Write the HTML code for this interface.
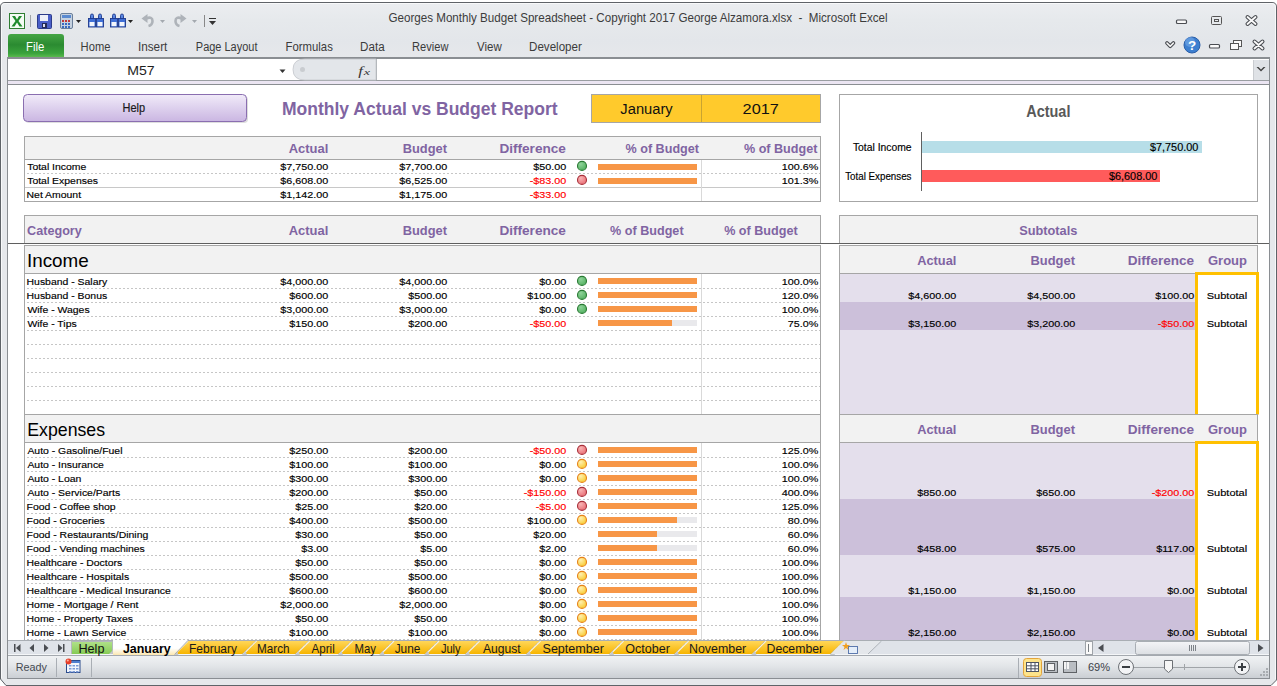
<!DOCTYPE html><html><head><meta charset="utf-8"><style>html,body{margin:0;padding:0;width:1277px;height:686px;overflow:hidden;background:#fff}svg{display:block}text{white-space:pre}</style></head><body><svg width="1277" height="686" viewBox="0 0 1277 686"><defs>
<linearGradient id="gFrame" gradientUnits="userSpaceOnUse" x1="0" y1="0" x2="0" y2="686"><stop offset="0" stop-color="#eceef1"/><stop offset="0.03" stop-color="#e6e9ec"/><stop offset="0.06" stop-color="#e3e6ea"/><stop offset="0.085" stop-color="#e6e8eb"/><stop offset="1" stop-color="#e6e8eb"/></linearGradient>
<linearGradient id="gFile" x1="0" y1="0" x2="0" y2="1"><stop offset="0" stop-color="#45a545"/><stop offset="0.45" stop-color="#2b8b31"/><stop offset="0.8" stop-color="#3aa23c"/><stop offset="1" stop-color="#62c052"/></linearGradient>
<linearGradient id="gHelp" x1="0" y1="0" x2="0" y2="1"><stop offset="0" stop-color="#f1ebf9"/><stop offset="1" stop-color="#cab6e2"/></linearGradient>
<linearGradient id="gTab" x1="0" y1="0" x2="0" y2="1"><stop offset="0" stop-color="#ffd659"/><stop offset="1" stop-color="#f7b500"/></linearGradient>
<linearGradient id="gTabHelp" x1="0" y1="0" x2="0" y2="1"><stop offset="0" stop-color="#b2e28c"/><stop offset="1" stop-color="#86cb55"/></linearGradient>
<linearGradient id="gTabAct" x1="0" y1="0" x2="0" y2="1"><stop offset="0" stop-color="#ffffff"/><stop offset="0.55" stop-color="#ffffff"/><stop offset="1" stop-color="#fbe7b0"/></linearGradient>
<linearGradient id="gStatus" x1="0" y1="0" x2="0" y2="1"><stop offset="0" stop-color="#f0f2f4"/><stop offset="0.45" stop-color="#e2e5e8"/><stop offset="1" stop-color="#c9cdd2"/></linearGradient>
<linearGradient id="gScroll" x1="0" y1="0" x2="0" y2="1"><stop offset="0" stop-color="#f4f5f7"/><stop offset="1" stop-color="#dcdfe3"/></linearGradient>
<radialGradient id="dG" cx="0.35" cy="0.3" r="0.8"><stop offset="0" stop-color="#8fd39a"/><stop offset="1" stop-color="#4fae5c"/></radialGradient>
<radialGradient id="dR" cx="0.35" cy="0.3" r="0.8"><stop offset="0" stop-color="#f8b4b4"/><stop offset="1" stop-color="#e86a72"/></radialGradient>
<radialGradient id="dY" cx="0.35" cy="0.3" r="0.8"><stop offset="0" stop-color="#fff0b0"/><stop offset="1" stop-color="#f8c828"/></radialGradient>
</defs>
<rect x="0" y="0" width="1277" height="686" fill="#ffffff" />
<path d="M0.5,679 L0.5,7 Q0.5,2.5 5,2.5 L1272,2.5 Q1276.5,2.5 1276.5,7 L1276.5,680 L1271,685.5 L6,685.5 L0.5,679 Z" fill="url(#gFrame)" stroke="#5f6368" stroke-width="1"/>
<path d="M1.5,678 L1.5,7 Q1.5,3.5 5,3.5 L1272,3.5 Q1275.5,3.5 1275.5,7 L1275.5,679" fill="none" stroke="#f8f9fa" stroke-width="1"/>
<text transform="translate(388.42,22) scale(0.8916,1)" style="font-family:'Liberation Sans';font-size:13.04px;font-weight:normal;" fill="#3c3c3c" >Georges Monthly Budget Spreadsheet - Copyright 2017 George Alzamora.xlsx  -  Microsoft Excel</text>
<path d="M8,58 L8,37 Q8,34 11,34 L61,34 Q64,34 64,37 L64,58 Z" fill="url(#gFile)"/>
<text transform="translate(26.09,50.5) scale(0.9122,1)" style="font-family:'Liberation Sans';font-size:12.46px;font-weight:normal;" fill="#ffffff" >File</text>
<text transform="translate(80.61,50.5) scale(0.8963,1)" style="font-family:'Liberation Sans';font-size:12.46px;font-weight:normal;" fill="#3b3b3b" >Home</text>
<text transform="translate(137.94,50.5) scale(0.9442,1)" style="font-family:'Liberation Sans';font-size:12.46px;font-weight:normal;" fill="#3b3b3b" >Insert</text>
<text transform="translate(195.82,50.5) scale(0.8823,1)" style="font-family:'Liberation Sans';font-size:12.46px;font-weight:normal;" fill="#3b3b3b" >Page Layout</text>
<text transform="translate(285.59,50.5) scale(0.9096,1)" style="font-family:'Liberation Sans';font-size:12.46px;font-weight:normal;" fill="#3b3b3b" >Formulas</text>
<text transform="translate(360.07,50.5) scale(0.9339,1)" style="font-family:'Liberation Sans';font-size:12.46px;font-weight:normal;" fill="#3b3b3b" >Data</text>
<text transform="translate(412.11,50.5) scale(0.8907,1)" style="font-family:'Liberation Sans';font-size:12.46px;font-weight:normal;" fill="#3b3b3b" >Review</text>
<text transform="translate(477.00,50.5) scale(0.9224,1)" style="font-family:'Liberation Sans';font-size:12.46px;font-weight:normal;" fill="#3b3b3b" >View</text>
<text transform="translate(529.07,50.5) scale(0.9290,1)" style="font-family:'Liberation Sans';font-size:12.46px;font-weight:normal;" fill="#3b3b3b" >Developer</text>
<rect x="7" y="57" width="1263" height="28" fill="#ffffff" />
<rect x="7" y="57" width="1263" height="2" fill="#8a8e92" />
<rect x="7" y="57" width="1" height="28" fill="#8a8e92" />
<rect x="1269" y="57" width="1" height="28" fill="#8a8e92" />
<rect x="8" y="80" width="1261" height="1" fill="#9a9ea2" />
<rect x="8" y="81" width="1261" height="3" fill="#ebe5f2" />
<rect x="8" y="84" width="1261" height="1" fill="#8a8e92" />
<text transform="translate(127.17,74.8) scale(1.0831,1)" style="font-family:'Liberation Sans';font-size:13.04px;font-weight:normal;" fill="#1e1e1e" >M57</text>
<path d="M279.5,69.5 L285.5,69.5 L282.5,73 Z" fill="#333"/>
<path d="M305,59 L376,59 L376,80 L305,80 Q293,80 293,69.5 Q293,59 305,59 Z" fill="#e3e6ea" stroke="#c4c7cb" stroke-width="0.8"/>
<circle cx="302.5" cy="69.5" r="2.5" fill="#c9ccd0"/>
<rect x="376" y="59" width="1" height="21" fill="#b4b8bc" />
<text transform="translate(358.33,74.5) scale(1.3333,1)" style="font-family:'Liberation Serif';font-size:12.50px;font-weight:normal;font-style:italic;" fill="#333" >f</text>
<text transform="translate(363.78,74.5) scale(1.5700,1)" style="font-family:'Liberation Serif';font-size:9.00px;font-weight:normal;font-style:italic;" fill="#333" >x</text>
<rect x="1254" y="60" width="15" height="20" fill="#dfe2e6" />
<rect x="1253" y="60" width="1" height="20" fill="#c9ccd0" />
<path d="M1256.5,67 L1258.5,67 L1261,69.5 L1263.5,67 L1265.5,67 L1261,71.5 Z" fill="#444"/>
<rect x="8" y="85" width="1261" height="555" fill="#ffffff" />
<rect x="7" y="85" width="1" height="571" fill="#8a8e92" />
<rect x="1269" y="85" width="1" height="571" fill="#8a8e92" />
<rect x="25" y="96" width="223" height="27" rx="4" ry="4" fill="#c8c8c8" opacity="0.6"/>
<rect x="23.5" y="94.5" width="223" height="27" rx="4" ry="4" fill="url(#gHelp)" stroke="#8a6eb0" stroke-width="1"/>
<text transform="translate(122.52,111.9) scale(0.9236,1)" style="font-family:'Liberation Sans';font-size:11.88px;font-weight:normal;" fill="#1a1a1a" stroke="#1a1a1a" stroke-width="0.2">Help</text>
<text transform="translate(281.95,115) scale(0.9164,1)" style="font-family:'Liberation Sans';font-size:19.13px;font-weight:bold;" fill="#8064a2" >Monthly Actual vs Budget Report</text>
<rect x="591" y="94" width="230" height="29" fill="#ffca2c" />
<rect x="591" y="94" width="230" height="1" fill="#a6a6a6" />
<rect x="591" y="122" width="230" height="1" fill="#a6a6a6" />
<rect x="591" y="94" width="1" height="29" fill="#a6a6a6" />
<rect x="820" y="94" width="1" height="29" fill="#a6a6a6" />
<rect x="701" y="95" width="1" height="27" fill="#c9a431" />
<text transform="translate(620.35,113.8) scale(0.9489,1)" style="font-family:'Liberation Sans';font-size:15.51px;font-weight:normal;" fill="#111" >January</text>
<text transform="translate(742.58,113.8) scale(1.0513,1)" style="font-family:'Liberation Sans';font-size:15.51px;font-weight:normal;" fill="#111" >2017</text>
<rect x="25" y="137" width="795" height="22" fill="#f2f2f2" />
<rect x="24" y="136" width="797" height="1" fill="#a6a6a6" />
<rect x="24" y="201" width="797" height="1" fill="#a6a6a6" />
<rect x="24" y="136" width="1" height="66" fill="#a6a6a6" />
<rect x="820" y="136" width="1" height="66" fill="#a6a6a6" />
<rect x="25" y="159" width="795" height="1" fill="#a6a6a6" />
<text transform="translate(288.74,153) scale(0.9728,1)" style="font-family:'Liberation Sans';font-size:13.33px;font-weight:bold;" fill="#8064a2" >Actual</text>
<text transform="translate(402.73,153) scale(0.9650,1)" style="font-family:'Liberation Sans';font-size:13.33px;font-weight:bold;" fill="#8064a2" >Budget</text>
<text transform="translate(499.38,153) scale(1.0209,1)" style="font-family:'Liberation Sans';font-size:13.33px;font-weight:bold;" fill="#8064a2" >Difference</text>
<text transform="translate(625.55,153) scale(0.9450,1)" style="font-family:'Liberation Sans';font-size:13.33px;font-weight:bold;" fill="#8064a2" >% of Budget</text>
<text transform="translate(743.95,153) scale(0.9450,1)" style="font-family:'Liberation Sans';font-size:13.33px;font-weight:bold;" fill="#8064a2" >% of Budget</text>
<line x1="27" y1="173.5" x2="820" y2="173.5" stroke="#c6c6c6" stroke-width="1" stroke-dasharray="2,2"/>
<rect x="25" y="187" width="795" height="1" fill="#c8c8c8" />
<rect x="701" y="160" width="1" height="41" fill="#d9d9d9" />
<text transform="translate(27.19,170) scale(1.0880,1)" style="font-family:'Liberation Sans';font-size:9.60px;font-weight:normal;" fill="#000" stroke="#000" stroke-width="0.15">Total Income</text>
<text transform="translate(280.34,170) scale(1.1250,1)" style="font-family:'Liberation Sans';font-size:9.60px;font-weight:normal;" fill="#000" stroke="#000" stroke-width="0.15">$7,750.00</text>
<text transform="translate(399.34,170) scale(1.1250,1)" style="font-family:'Liberation Sans';font-size:9.60px;font-weight:normal;" fill="#000" stroke="#000" stroke-width="0.15">$7,700.00</text>
<text transform="translate(533.36,170) scale(1.1250,1)" style="font-family:'Liberation Sans';font-size:9.60px;font-weight:normal;" fill="#000" stroke="#000" stroke-width="0.15">$50.00</text>
<circle cx="582" cy="165.9" r="4.5" fill="url(#dG)" stroke="#2a7a34" stroke-width="1.1"/>
<rect x="598" y="164" width="99" height="6" fill="#e9e9ec" />
<rect x="598" y="164" width="99" height="6" fill="#f79646" />
<text transform="translate(781.69,170) scale(1.1250,1)" style="font-family:'Liberation Sans';font-size:9.60px;font-weight:normal;" fill="#000" stroke="#000" stroke-width="0.15">100.6%</text>
<text transform="translate(27.19,184) scale(1.0880,1)" style="font-family:'Liberation Sans';font-size:9.60px;font-weight:normal;" fill="#000" stroke="#000" stroke-width="0.15">Total Expenses</text>
<text transform="translate(280.34,184) scale(1.1250,1)" style="font-family:'Liberation Sans';font-size:9.60px;font-weight:normal;" fill="#000" stroke="#000" stroke-width="0.15">$6,608.00</text>
<text transform="translate(399.34,184) scale(1.1250,1)" style="font-family:'Liberation Sans';font-size:9.60px;font-weight:normal;" fill="#000" stroke="#000" stroke-width="0.15">$6,525.00</text>
<text transform="translate(529.76,184) scale(1.1250,1)" style="font-family:'Liberation Sans';font-size:9.60px;font-weight:normal;" fill="#ff0000" stroke="#ff0000" stroke-width="0.15">-$83.00</text>
<circle cx="582" cy="179.9" r="4.5" fill="url(#dR)" stroke="#a8303a" stroke-width="1.1"/>
<rect x="598" y="178" width="99" height="6" fill="#e9e9ec" />
<rect x="598" y="178" width="99" height="6" fill="#f79646" />
<text transform="translate(781.69,184) scale(1.1250,1)" style="font-family:'Liberation Sans';font-size:9.60px;font-weight:normal;" fill="#000" stroke="#000" stroke-width="0.15">101.3%</text>
<text transform="translate(26.56,198) scale(1.0880,1)" style="font-family:'Liberation Sans';font-size:9.60px;font-weight:normal;" fill="#000" stroke="#000" stroke-width="0.15">Net Amount</text>
<text transform="translate(280.34,198) scale(1.1250,1)" style="font-family:'Liberation Sans';font-size:9.60px;font-weight:normal;" fill="#000" stroke="#000" stroke-width="0.15">$1,142.00</text>
<text transform="translate(399.34,198) scale(1.1250,1)" style="font-family:'Liberation Sans';font-size:9.60px;font-weight:normal;" fill="#000" stroke="#000" stroke-width="0.15">$1,175.00</text>
<text transform="translate(529.76,198) scale(1.1250,1)" style="font-family:'Liberation Sans';font-size:9.60px;font-weight:normal;" fill="#ff0000" stroke="#ff0000" stroke-width="0.15">-$33.00</text>
<rect x="24" y="215" width="797" height="29" fill="#f2f2f2" />
<rect x="24" y="215" width="797" height="1" fill="#a6a6a6" />
<rect x="24" y="215" width="1" height="29" fill="#a6a6a6" />
<rect x="820" y="215" width="1" height="29" fill="#a6a6a6" />
<text transform="translate(27.09,234.8) scale(0.9475,1)" style="font-family:'Liberation Sans';font-size:13.33px;font-weight:bold;" fill="#8064a2" >Category</text>
<text transform="translate(288.74,234.8) scale(0.9728,1)" style="font-family:'Liberation Sans';font-size:13.33px;font-weight:bold;" fill="#8064a2" >Actual</text>
<text transform="translate(402.73,234.8) scale(0.9650,1)" style="font-family:'Liberation Sans';font-size:13.33px;font-weight:bold;" fill="#8064a2" >Budget</text>
<text transform="translate(499.38,234.8) scale(1.0209,1)" style="font-family:'Liberation Sans';font-size:13.33px;font-weight:bold;" fill="#8064a2" >Difference</text>
<text transform="translate(610.05,234.8) scale(0.9463,1)" style="font-family:'Liberation Sans';font-size:13.33px;font-weight:bold;" fill="#8064a2" >% of Budget</text>
<text transform="translate(724.15,234.8) scale(0.9463,1)" style="font-family:'Liberation Sans';font-size:13.33px;font-weight:bold;" fill="#8064a2" >% of Budget</text>
<rect x="839" y="215" width="419" height="29" fill="#f2f2f2" />
<rect x="839" y="215" width="419" height="1" fill="#a6a6a6" />
<rect x="839" y="215" width="1" height="29" fill="#a6a6a6" />
<rect x="1257" y="215" width="1" height="29" fill="#a6a6a6" />
<text transform="translate(1019.14,234.5) scale(0.9601,1)" style="font-family:'Liberation Sans';font-size:13.33px;font-weight:bold;" fill="#8064a2" >Subtotals</text>
<rect x="8" y="243" width="1261" height="1" fill="#5f5f5f" />
<rect x="24" y="245" width="797" height="29" fill="#f2f2f2" />
<rect x="24" y="245" width="797" height="1" fill="#a6a6a6" />
<rect x="24" y="273" width="797" height="1" fill="#a6a6a6" />
<rect x="24" y="245" width="1" height="29" fill="#a6a6a6" />
<rect x="820" y="245" width="1" height="29" fill="#a6a6a6" />
<text transform="translate(27.00,266.9) scale(0.9999,1)" style="font-family:'Liberation Sans';font-size:18.84px;font-weight:normal;" fill="#000" >Income</text>
<rect x="24" y="274" width="1" height="141" fill="#a6a6a6" />
<rect x="820" y="274" width="1" height="141" fill="#a6a6a6" />
<rect x="701" y="274" width="1" height="141" fill="#d9d9d9" />
<line x1="27" y1="288.5" x2="820" y2="288.5" stroke="#c6c6c6" stroke-width="1" stroke-dasharray="2,2"/>
<text transform="translate(26.56,285) scale(1.0880,1)" style="font-family:'Liberation Sans';font-size:9.60px;font-weight:normal;" fill="#000" stroke="#000" stroke-width="0.15">Husband - Salary</text>
<text transform="translate(280.34,285) scale(1.1250,1)" style="font-family:'Liberation Sans';font-size:9.60px;font-weight:normal;" fill="#000" stroke="#000" stroke-width="0.15">$4,000.00</text>
<text transform="translate(399.34,285) scale(1.1250,1)" style="font-family:'Liberation Sans';font-size:9.60px;font-weight:normal;" fill="#000" stroke="#000" stroke-width="0.15">$4,000.00</text>
<text transform="translate(539.36,285) scale(1.1250,1)" style="font-family:'Liberation Sans';font-size:9.60px;font-weight:normal;" fill="#000" stroke="#000" stroke-width="0.15">$0.00</text>
<circle cx="582" cy="280.9" r="4.5" fill="url(#dG)" stroke="#2a7a34" stroke-width="1.1"/>
<rect x="598" y="278" width="99" height="6" fill="#e9e9ec" />
<rect x="598" y="278" width="99" height="6" fill="#f79646" />
<text transform="translate(781.69,285) scale(1.1250,1)" style="font-family:'Liberation Sans';font-size:9.60px;font-weight:normal;" fill="#000" stroke="#000" stroke-width="0.15">100.0%</text>
<line x1="27" y1="302.5" x2="820" y2="302.5" stroke="#c6c6c6" stroke-width="1" stroke-dasharray="2,2"/>
<text transform="translate(26.56,299) scale(1.0880,1)" style="font-family:'Liberation Sans';font-size:9.60px;font-weight:normal;" fill="#000" stroke="#000" stroke-width="0.15">Husband - Bonus</text>
<text transform="translate(289.35,299) scale(1.1250,1)" style="font-family:'Liberation Sans';font-size:9.60px;font-weight:normal;" fill="#000" stroke="#000" stroke-width="0.15">$600.00</text>
<text transform="translate(408.35,299) scale(1.1250,1)" style="font-family:'Liberation Sans';font-size:9.60px;font-weight:normal;" fill="#000" stroke="#000" stroke-width="0.15">$500.00</text>
<text transform="translate(527.35,299) scale(1.1250,1)" style="font-family:'Liberation Sans';font-size:9.60px;font-weight:normal;" fill="#000" stroke="#000" stroke-width="0.15">$100.00</text>
<circle cx="582" cy="294.9" r="4.5" fill="url(#dG)" stroke="#2a7a34" stroke-width="1.1"/>
<rect x="598" y="292" width="99" height="6" fill="#e9e9ec" />
<rect x="598" y="292" width="99" height="6" fill="#f79646" />
<text transform="translate(781.69,299) scale(1.1250,1)" style="font-family:'Liberation Sans';font-size:9.60px;font-weight:normal;" fill="#000" stroke="#000" stroke-width="0.15">120.0%</text>
<line x1="27" y1="316.5" x2="820" y2="316.5" stroke="#c6c6c6" stroke-width="1" stroke-dasharray="2,2"/>
<text transform="translate(27.40,313) scale(1.0880,1)" style="font-family:'Liberation Sans';font-size:9.60px;font-weight:normal;" fill="#000" stroke="#000" stroke-width="0.15">Wife - Wages</text>
<text transform="translate(280.34,313) scale(1.1250,1)" style="font-family:'Liberation Sans';font-size:9.60px;font-weight:normal;" fill="#000" stroke="#000" stroke-width="0.15">$3,000.00</text>
<text transform="translate(399.34,313) scale(1.1250,1)" style="font-family:'Liberation Sans';font-size:9.60px;font-weight:normal;" fill="#000" stroke="#000" stroke-width="0.15">$3,000.00</text>
<text transform="translate(539.36,313) scale(1.1250,1)" style="font-family:'Liberation Sans';font-size:9.60px;font-weight:normal;" fill="#000" stroke="#000" stroke-width="0.15">$0.00</text>
<circle cx="582" cy="308.9" r="4.5" fill="url(#dG)" stroke="#2a7a34" stroke-width="1.1"/>
<rect x="598" y="306" width="99" height="6" fill="#e9e9ec" />
<rect x="598" y="306" width="99" height="6" fill="#f79646" />
<text transform="translate(781.69,313) scale(1.1250,1)" style="font-family:'Liberation Sans';font-size:9.60px;font-weight:normal;" fill="#000" stroke="#000" stroke-width="0.15">100.0%</text>
<line x1="27" y1="330.5" x2="820" y2="330.5" stroke="#c6c6c6" stroke-width="1" stroke-dasharray="2,2"/>
<text transform="translate(27.40,327) scale(1.0880,1)" style="font-family:'Liberation Sans';font-size:9.60px;font-weight:normal;" fill="#000" stroke="#000" stroke-width="0.15">Wife - Tips</text>
<text transform="translate(289.35,327) scale(1.1250,1)" style="font-family:'Liberation Sans';font-size:9.60px;font-weight:normal;" fill="#000" stroke="#000" stroke-width="0.15">$150.00</text>
<text transform="translate(408.35,327) scale(1.1250,1)" style="font-family:'Liberation Sans';font-size:9.60px;font-weight:normal;" fill="#000" stroke="#000" stroke-width="0.15">$200.00</text>
<text transform="translate(529.76,327) scale(1.1250,1)" style="font-family:'Liberation Sans';font-size:9.60px;font-weight:normal;" fill="#ff0000" stroke="#ff0000" stroke-width="0.15">-$50.00</text>
<rect x="598" y="320" width="99" height="6" fill="#e9e9ec" />
<rect x="598" y="320" width="74" height="6" fill="#f79646" />
<text transform="translate(787.69,327) scale(1.1250,1)" style="font-family:'Liberation Sans';font-size:9.60px;font-weight:normal;" fill="#000" stroke="#000" stroke-width="0.15">75.0%</text>
<line x1="27" y1="344.5" x2="820" y2="344.5" stroke="#c6c6c6" stroke-width="1" stroke-dasharray="2,2"/>
<line x1="27" y1="358.5" x2="820" y2="358.5" stroke="#c6c6c6" stroke-width="1" stroke-dasharray="2,2"/>
<line x1="27" y1="372.5" x2="820" y2="372.5" stroke="#c6c6c6" stroke-width="1" stroke-dasharray="2,2"/>
<line x1="27" y1="386.5" x2="820" y2="386.5" stroke="#c6c6c6" stroke-width="1" stroke-dasharray="2,2"/>
<line x1="27" y1="400.5" x2="820" y2="400.5" stroke="#c6c6c6" stroke-width="1" stroke-dasharray="2,2"/>
<line x1="27" y1="414.5" x2="820" y2="414.5" stroke="#c6c6c6" stroke-width="1" stroke-dasharray="2,2"/>
<rect x="24" y="414" width="797" height="29" fill="#f2f2f2" />
<rect x="24" y="414" width="797" height="1" fill="#a6a6a6" />
<rect x="24" y="442" width="797" height="1" fill="#a6a6a6" />
<rect x="24" y="414" width="1" height="29" fill="#a6a6a6" />
<rect x="820" y="414" width="1" height="29" fill="#a6a6a6" />
<text transform="translate(27.28,436) scale(0.9409,1)" style="font-family:'Liberation Sans';font-size:18.84px;font-weight:normal;" fill="#000" >Expenses</text>
<rect x="24" y="443" width="1" height="211" fill="#a6a6a6" />
<rect x="820" y="443" width="1" height="211" fill="#a6a6a6" />
<rect x="701" y="443" width="1" height="211" fill="#d9d9d9" />
<line x1="27" y1="457.5" x2="820" y2="457.5" stroke="#c6c6c6" stroke-width="1" stroke-dasharray="2,2"/>
<text transform="translate(27.40,454) scale(1.0880,1)" style="font-family:'Liberation Sans';font-size:9.60px;font-weight:normal;" fill="#000" stroke="#000" stroke-width="0.15">Auto - Gasoline/Fuel</text>
<text transform="translate(289.35,454) scale(1.1250,1)" style="font-family:'Liberation Sans';font-size:9.60px;font-weight:normal;" fill="#000" stroke="#000" stroke-width="0.15">$250.00</text>
<text transform="translate(408.35,454) scale(1.1250,1)" style="font-family:'Liberation Sans';font-size:9.60px;font-weight:normal;" fill="#000" stroke="#000" stroke-width="0.15">$200.00</text>
<text transform="translate(529.76,454) scale(1.1250,1)" style="font-family:'Liberation Sans';font-size:9.60px;font-weight:normal;" fill="#ff0000" stroke="#ff0000" stroke-width="0.15">-$50.00</text>
<circle cx="582" cy="449.9" r="4.5" fill="url(#dR)" stroke="#a8303a" stroke-width="1.1"/>
<rect x="598" y="447" width="99" height="6" fill="#e9e9ec" />
<rect x="598" y="447" width="99" height="6" fill="#f79646" />
<text transform="translate(781.69,454) scale(1.1250,1)" style="font-family:'Liberation Sans';font-size:9.60px;font-weight:normal;" fill="#000" stroke="#000" stroke-width="0.15">125.0%</text>
<line x1="27" y1="471.5" x2="820" y2="471.5" stroke="#c6c6c6" stroke-width="1" stroke-dasharray="2,2"/>
<text transform="translate(27.40,468) scale(1.0880,1)" style="font-family:'Liberation Sans';font-size:9.60px;font-weight:normal;" fill="#000" stroke="#000" stroke-width="0.15">Auto - Insurance</text>
<text transform="translate(289.35,468) scale(1.1250,1)" style="font-family:'Liberation Sans';font-size:9.60px;font-weight:normal;" fill="#000" stroke="#000" stroke-width="0.15">$100.00</text>
<text transform="translate(408.35,468) scale(1.1250,1)" style="font-family:'Liberation Sans';font-size:9.60px;font-weight:normal;" fill="#000" stroke="#000" stroke-width="0.15">$100.00</text>
<text transform="translate(539.36,468) scale(1.1250,1)" style="font-family:'Liberation Sans';font-size:9.60px;font-weight:normal;" fill="#000" stroke="#000" stroke-width="0.15">$0.00</text>
<circle cx="582" cy="463.9" r="4.5" fill="url(#dY)" stroke="#e6821a" stroke-width="1.1"/>
<rect x="598" y="461" width="99" height="6" fill="#e9e9ec" />
<rect x="598" y="461" width="99" height="6" fill="#f79646" />
<text transform="translate(781.69,468) scale(1.1250,1)" style="font-family:'Liberation Sans';font-size:9.60px;font-weight:normal;" fill="#000" stroke="#000" stroke-width="0.15">100.0%</text>
<line x1="27" y1="485.5" x2="820" y2="485.5" stroke="#c6c6c6" stroke-width="1" stroke-dasharray="2,2"/>
<text transform="translate(27.40,482) scale(1.0880,1)" style="font-family:'Liberation Sans';font-size:9.60px;font-weight:normal;" fill="#000" stroke="#000" stroke-width="0.15">Auto - Loan</text>
<text transform="translate(289.35,482) scale(1.1250,1)" style="font-family:'Liberation Sans';font-size:9.60px;font-weight:normal;" fill="#000" stroke="#000" stroke-width="0.15">$300.00</text>
<text transform="translate(408.35,482) scale(1.1250,1)" style="font-family:'Liberation Sans';font-size:9.60px;font-weight:normal;" fill="#000" stroke="#000" stroke-width="0.15">$300.00</text>
<text transform="translate(539.36,482) scale(1.1250,1)" style="font-family:'Liberation Sans';font-size:9.60px;font-weight:normal;" fill="#000" stroke="#000" stroke-width="0.15">$0.00</text>
<circle cx="582" cy="477.9" r="4.5" fill="url(#dY)" stroke="#e6821a" stroke-width="1.1"/>
<rect x="598" y="475" width="99" height="6" fill="#e9e9ec" />
<rect x="598" y="475" width="99" height="6" fill="#f79646" />
<text transform="translate(781.69,482) scale(1.1250,1)" style="font-family:'Liberation Sans';font-size:9.60px;font-weight:normal;" fill="#000" stroke="#000" stroke-width="0.15">100.0%</text>
<line x1="27" y1="499.5" x2="820" y2="499.5" stroke="#c6c6c6" stroke-width="1" stroke-dasharray="2,2"/>
<text transform="translate(27.40,496) scale(1.0880,1)" style="font-family:'Liberation Sans';font-size:9.60px;font-weight:normal;" fill="#000" stroke="#000" stroke-width="0.15">Auto - Service/Parts</text>
<text transform="translate(289.35,496) scale(1.1250,1)" style="font-family:'Liberation Sans';font-size:9.60px;font-weight:normal;" fill="#000" stroke="#000" stroke-width="0.15">$200.00</text>
<text transform="translate(414.36,496) scale(1.1250,1)" style="font-family:'Liberation Sans';font-size:9.60px;font-weight:normal;" fill="#000" stroke="#000" stroke-width="0.15">$50.00</text>
<text transform="translate(523.75,496) scale(1.1250,1)" style="font-family:'Liberation Sans';font-size:9.60px;font-weight:normal;" fill="#ff0000" stroke="#ff0000" stroke-width="0.15">-$150.00</text>
<circle cx="582" cy="491.9" r="4.5" fill="url(#dR)" stroke="#a8303a" stroke-width="1.1"/>
<rect x="598" y="489" width="99" height="6" fill="#e9e9ec" />
<rect x="598" y="489" width="99" height="6" fill="#f79646" />
<text transform="translate(781.69,496) scale(1.1250,1)" style="font-family:'Liberation Sans';font-size:9.60px;font-weight:normal;" fill="#000" stroke="#000" stroke-width="0.15">400.0%</text>
<line x1="27" y1="513.5" x2="820" y2="513.5" stroke="#c6c6c6" stroke-width="1" stroke-dasharray="2,2"/>
<text transform="translate(26.56,510) scale(1.0880,1)" style="font-family:'Liberation Sans';font-size:9.60px;font-weight:normal;" fill="#000" stroke="#000" stroke-width="0.15">Food - Coffee shop</text>
<text transform="translate(295.36,510) scale(1.1250,1)" style="font-family:'Liberation Sans';font-size:9.60px;font-weight:normal;" fill="#000" stroke="#000" stroke-width="0.15">$25.00</text>
<text transform="translate(414.36,510) scale(1.1250,1)" style="font-family:'Liberation Sans';font-size:9.60px;font-weight:normal;" fill="#000" stroke="#000" stroke-width="0.15">$20.00</text>
<text transform="translate(535.77,510) scale(1.1250,1)" style="font-family:'Liberation Sans';font-size:9.60px;font-weight:normal;" fill="#ff0000" stroke="#ff0000" stroke-width="0.15">-$5.00</text>
<circle cx="582" cy="505.9" r="4.5" fill="url(#dR)" stroke="#a8303a" stroke-width="1.1"/>
<rect x="598" y="503" width="99" height="6" fill="#e9e9ec" />
<rect x="598" y="503" width="99" height="6" fill="#f79646" />
<text transform="translate(781.69,510) scale(1.1250,1)" style="font-family:'Liberation Sans';font-size:9.60px;font-weight:normal;" fill="#000" stroke="#000" stroke-width="0.15">125.0%</text>
<line x1="27" y1="527.5" x2="820" y2="527.5" stroke="#c6c6c6" stroke-width="1" stroke-dasharray="2,2"/>
<text transform="translate(26.56,524) scale(1.0880,1)" style="font-family:'Liberation Sans';font-size:9.60px;font-weight:normal;" fill="#000" stroke="#000" stroke-width="0.15">Food - Groceries</text>
<text transform="translate(289.35,524) scale(1.1250,1)" style="font-family:'Liberation Sans';font-size:9.60px;font-weight:normal;" fill="#000" stroke="#000" stroke-width="0.15">$400.00</text>
<text transform="translate(408.35,524) scale(1.1250,1)" style="font-family:'Liberation Sans';font-size:9.60px;font-weight:normal;" fill="#000" stroke="#000" stroke-width="0.15">$500.00</text>
<text transform="translate(527.35,524) scale(1.1250,1)" style="font-family:'Liberation Sans';font-size:9.60px;font-weight:normal;" fill="#000" stroke="#000" stroke-width="0.15">$100.00</text>
<circle cx="582" cy="519.9" r="4.5" fill="url(#dY)" stroke="#e6821a" stroke-width="1.1"/>
<rect x="598" y="517" width="99" height="6" fill="#e9e9ec" />
<rect x="598" y="517" width="79" height="6" fill="#f79646" />
<text transform="translate(787.69,524) scale(1.1250,1)" style="font-family:'Liberation Sans';font-size:9.60px;font-weight:normal;" fill="#000" stroke="#000" stroke-width="0.15">80.0%</text>
<line x1="27" y1="541.5" x2="820" y2="541.5" stroke="#c6c6c6" stroke-width="1" stroke-dasharray="2,2"/>
<text transform="translate(26.56,538) scale(1.0880,1)" style="font-family:'Liberation Sans';font-size:9.60px;font-weight:normal;" fill="#000" stroke="#000" stroke-width="0.15">Food - Restaurants/Dining</text>
<text transform="translate(295.36,538) scale(1.1250,1)" style="font-family:'Liberation Sans';font-size:9.60px;font-weight:normal;" fill="#000" stroke="#000" stroke-width="0.15">$30.00</text>
<text transform="translate(414.36,538) scale(1.1250,1)" style="font-family:'Liberation Sans';font-size:9.60px;font-weight:normal;" fill="#000" stroke="#000" stroke-width="0.15">$50.00</text>
<text transform="translate(533.36,538) scale(1.1250,1)" style="font-family:'Liberation Sans';font-size:9.60px;font-weight:normal;" fill="#000" stroke="#000" stroke-width="0.15">$20.00</text>
<rect x="598" y="531" width="99" height="6" fill="#e9e9ec" />
<rect x="598" y="531" width="59" height="6" fill="#f79646" />
<text transform="translate(787.69,538) scale(1.1250,1)" style="font-family:'Liberation Sans';font-size:9.60px;font-weight:normal;" fill="#000" stroke="#000" stroke-width="0.15">60.0%</text>
<line x1="27" y1="555.5" x2="820" y2="555.5" stroke="#c6c6c6" stroke-width="1" stroke-dasharray="2,2"/>
<text transform="translate(26.56,552) scale(1.0880,1)" style="font-family:'Liberation Sans';font-size:9.60px;font-weight:normal;" fill="#000" stroke="#000" stroke-width="0.15">Food - Vending machines</text>
<text transform="translate(301.36,552) scale(1.1250,1)" style="font-family:'Liberation Sans';font-size:9.60px;font-weight:normal;" fill="#000" stroke="#000" stroke-width="0.15">$3.00</text>
<text transform="translate(420.36,552) scale(1.1250,1)" style="font-family:'Liberation Sans';font-size:9.60px;font-weight:normal;" fill="#000" stroke="#000" stroke-width="0.15">$5.00</text>
<text transform="translate(539.36,552) scale(1.1250,1)" style="font-family:'Liberation Sans';font-size:9.60px;font-weight:normal;" fill="#000" stroke="#000" stroke-width="0.15">$2.00</text>
<rect x="598" y="545" width="99" height="6" fill="#e9e9ec" />
<rect x="598" y="545" width="59" height="6" fill="#f79646" />
<text transform="translate(787.69,552) scale(1.1250,1)" style="font-family:'Liberation Sans';font-size:9.60px;font-weight:normal;" fill="#000" stroke="#000" stroke-width="0.15">60.0%</text>
<line x1="27" y1="569.5" x2="820" y2="569.5" stroke="#c6c6c6" stroke-width="1" stroke-dasharray="2,2"/>
<text transform="translate(26.56,566) scale(1.0880,1)" style="font-family:'Liberation Sans';font-size:9.60px;font-weight:normal;" fill="#000" stroke="#000" stroke-width="0.15">Healthcare - Doctors</text>
<text transform="translate(295.36,566) scale(1.1250,1)" style="font-family:'Liberation Sans';font-size:9.60px;font-weight:normal;" fill="#000" stroke="#000" stroke-width="0.15">$50.00</text>
<text transform="translate(414.36,566) scale(1.1250,1)" style="font-family:'Liberation Sans';font-size:9.60px;font-weight:normal;" fill="#000" stroke="#000" stroke-width="0.15">$50.00</text>
<text transform="translate(539.36,566) scale(1.1250,1)" style="font-family:'Liberation Sans';font-size:9.60px;font-weight:normal;" fill="#000" stroke="#000" stroke-width="0.15">$0.00</text>
<circle cx="582" cy="561.9" r="4.5" fill="url(#dY)" stroke="#e6821a" stroke-width="1.1"/>
<rect x="598" y="559" width="99" height="6" fill="#e9e9ec" />
<rect x="598" y="559" width="99" height="6" fill="#f79646" />
<text transform="translate(781.69,566) scale(1.1250,1)" style="font-family:'Liberation Sans';font-size:9.60px;font-weight:normal;" fill="#000" stroke="#000" stroke-width="0.15">100.0%</text>
<line x1="27" y1="583.5" x2="820" y2="583.5" stroke="#c6c6c6" stroke-width="1" stroke-dasharray="2,2"/>
<text transform="translate(26.56,580) scale(1.0880,1)" style="font-family:'Liberation Sans';font-size:9.60px;font-weight:normal;" fill="#000" stroke="#000" stroke-width="0.15">Healthcare - Hospitals</text>
<text transform="translate(289.35,580) scale(1.1250,1)" style="font-family:'Liberation Sans';font-size:9.60px;font-weight:normal;" fill="#000" stroke="#000" stroke-width="0.15">$500.00</text>
<text transform="translate(408.35,580) scale(1.1250,1)" style="font-family:'Liberation Sans';font-size:9.60px;font-weight:normal;" fill="#000" stroke="#000" stroke-width="0.15">$500.00</text>
<text transform="translate(539.36,580) scale(1.1250,1)" style="font-family:'Liberation Sans';font-size:9.60px;font-weight:normal;" fill="#000" stroke="#000" stroke-width="0.15">$0.00</text>
<circle cx="582" cy="575.9" r="4.5" fill="url(#dY)" stroke="#e6821a" stroke-width="1.1"/>
<rect x="598" y="573" width="99" height="6" fill="#e9e9ec" />
<rect x="598" y="573" width="99" height="6" fill="#f79646" />
<text transform="translate(781.69,580) scale(1.1250,1)" style="font-family:'Liberation Sans';font-size:9.60px;font-weight:normal;" fill="#000" stroke="#000" stroke-width="0.15">100.0%</text>
<line x1="27" y1="597.5" x2="820" y2="597.5" stroke="#c6c6c6" stroke-width="1" stroke-dasharray="2,2"/>
<text transform="translate(26.56,594) scale(1.0880,1)" style="font-family:'Liberation Sans';font-size:9.60px;font-weight:normal;" fill="#000" stroke="#000" stroke-width="0.15">Healthcare - Medical Insurance</text>
<text transform="translate(289.35,594) scale(1.1250,1)" style="font-family:'Liberation Sans';font-size:9.60px;font-weight:normal;" fill="#000" stroke="#000" stroke-width="0.15">$600.00</text>
<text transform="translate(408.35,594) scale(1.1250,1)" style="font-family:'Liberation Sans';font-size:9.60px;font-weight:normal;" fill="#000" stroke="#000" stroke-width="0.15">$600.00</text>
<text transform="translate(539.36,594) scale(1.1250,1)" style="font-family:'Liberation Sans';font-size:9.60px;font-weight:normal;" fill="#000" stroke="#000" stroke-width="0.15">$0.00</text>
<circle cx="582" cy="589.9" r="4.5" fill="url(#dY)" stroke="#e6821a" stroke-width="1.1"/>
<rect x="598" y="587" width="99" height="6" fill="#e9e9ec" />
<rect x="598" y="587" width="99" height="6" fill="#f79646" />
<text transform="translate(781.69,594) scale(1.1250,1)" style="font-family:'Liberation Sans';font-size:9.60px;font-weight:normal;" fill="#000" stroke="#000" stroke-width="0.15">100.0%</text>
<line x1="27" y1="611.5" x2="820" y2="611.5" stroke="#c6c6c6" stroke-width="1" stroke-dasharray="2,2"/>
<text transform="translate(26.56,608) scale(1.0880,1)" style="font-family:'Liberation Sans';font-size:9.60px;font-weight:normal;" fill="#000" stroke="#000" stroke-width="0.15">Home - Mortgage / Rent</text>
<text transform="translate(280.34,608) scale(1.1250,1)" style="font-family:'Liberation Sans';font-size:9.60px;font-weight:normal;" fill="#000" stroke="#000" stroke-width="0.15">$2,000.00</text>
<text transform="translate(399.34,608) scale(1.1250,1)" style="font-family:'Liberation Sans';font-size:9.60px;font-weight:normal;" fill="#000" stroke="#000" stroke-width="0.15">$2,000.00</text>
<text transform="translate(539.36,608) scale(1.1250,1)" style="font-family:'Liberation Sans';font-size:9.60px;font-weight:normal;" fill="#000" stroke="#000" stroke-width="0.15">$0.00</text>
<circle cx="582" cy="603.9" r="4.5" fill="url(#dY)" stroke="#e6821a" stroke-width="1.1"/>
<rect x="598" y="601" width="99" height="6" fill="#e9e9ec" />
<rect x="598" y="601" width="99" height="6" fill="#f79646" />
<text transform="translate(781.69,608) scale(1.1250,1)" style="font-family:'Liberation Sans';font-size:9.60px;font-weight:normal;" fill="#000" stroke="#000" stroke-width="0.15">100.0%</text>
<line x1="27" y1="625.5" x2="820" y2="625.5" stroke="#c6c6c6" stroke-width="1" stroke-dasharray="2,2"/>
<text transform="translate(26.56,622) scale(1.0880,1)" style="font-family:'Liberation Sans';font-size:9.60px;font-weight:normal;" fill="#000" stroke="#000" stroke-width="0.15">Home - Property Taxes</text>
<text transform="translate(295.36,622) scale(1.1250,1)" style="font-family:'Liberation Sans';font-size:9.60px;font-weight:normal;" fill="#000" stroke="#000" stroke-width="0.15">$50.00</text>
<text transform="translate(414.36,622) scale(1.1250,1)" style="font-family:'Liberation Sans';font-size:9.60px;font-weight:normal;" fill="#000" stroke="#000" stroke-width="0.15">$50.00</text>
<text transform="translate(539.36,622) scale(1.1250,1)" style="font-family:'Liberation Sans';font-size:9.60px;font-weight:normal;" fill="#000" stroke="#000" stroke-width="0.15">$0.00</text>
<circle cx="582" cy="617.9" r="4.5" fill="url(#dY)" stroke="#e6821a" stroke-width="1.1"/>
<rect x="598" y="615" width="99" height="6" fill="#e9e9ec" />
<rect x="598" y="615" width="99" height="6" fill="#f79646" />
<text transform="translate(781.69,622) scale(1.1250,1)" style="font-family:'Liberation Sans';font-size:9.60px;font-weight:normal;" fill="#000" stroke="#000" stroke-width="0.15">100.0%</text>
<line x1="27" y1="639.5" x2="820" y2="639.5" stroke="#c6c6c6" stroke-width="1" stroke-dasharray="2,2"/>
<text transform="translate(26.56,636) scale(1.0880,1)" style="font-family:'Liberation Sans';font-size:9.60px;font-weight:normal;" fill="#000" stroke="#000" stroke-width="0.15">Home - Lawn Service</text>
<text transform="translate(289.35,636) scale(1.1250,1)" style="font-family:'Liberation Sans';font-size:9.60px;font-weight:normal;" fill="#000" stroke="#000" stroke-width="0.15">$100.00</text>
<text transform="translate(408.35,636) scale(1.1250,1)" style="font-family:'Liberation Sans';font-size:9.60px;font-weight:normal;" fill="#000" stroke="#000" stroke-width="0.15">$100.00</text>
<text transform="translate(539.36,636) scale(1.1250,1)" style="font-family:'Liberation Sans';font-size:9.60px;font-weight:normal;" fill="#000" stroke="#000" stroke-width="0.15">$0.00</text>
<circle cx="582" cy="631.9" r="4.5" fill="url(#dY)" stroke="#e6821a" stroke-width="1.1"/>
<rect x="598" y="629" width="99" height="6" fill="#e9e9ec" />
<rect x="598" y="629" width="99" height="6" fill="#f79646" />
<text transform="translate(781.69,636) scale(1.1250,1)" style="font-family:'Liberation Sans';font-size:9.60px;font-weight:normal;" fill="#000" stroke="#000" stroke-width="0.15">100.0%</text>
<line x1="27" y1="653.5" x2="820" y2="653.5" stroke="#c6c6c6" stroke-width="1" stroke-dasharray="2,2"/>
<rect x="839" y="245" width="419" height="29" fill="#f2f2f2" />
<rect x="839" y="245" width="419" height="1" fill="#a6a6a6" />
<rect x="839" y="273" width="419" height="1" fill="#a6a6a6" />
<rect x="839" y="245" width="1" height="29" fill="#a6a6a6" />
<rect x="1257" y="245" width="1" height="29" fill="#a6a6a6" />
<text transform="translate(917.14,265) scale(0.9627,1)" style="font-family:'Liberation Sans';font-size:13.33px;font-weight:bold;" fill="#8064a2" >Actual</text>
<text transform="translate(1030.52,265) scale(0.9694,1)" style="font-family:'Liberation Sans';font-size:13.33px;font-weight:bold;" fill="#8064a2" >Budget</text>
<text transform="translate(1127.78,265) scale(1.0194,1)" style="font-family:'Liberation Sans';font-size:13.33px;font-weight:bold;" fill="#8064a2" >Difference</text>
<text transform="translate(1207.98,265) scale(0.9765,1)" style="font-family:'Liberation Sans';font-size:13.33px;font-weight:bold;" fill="#8064a2" >Group</text>
<rect x="840" y="274" width="356" height="140" fill="#e4dfec" />
<rect x="839" y="274" width="1" height="140" fill="#a6a6a6" />
<rect x="840" y="302" width="356" height="28" fill="#ccc0da" />
<path d="M1196.5,414.5 L1196.5,273.5 L1257.5,273.5 L1257.5,414.5" fill="none" stroke="#ffc000" stroke-width="3"/>
<text transform="translate(908.34,299) scale(1.1250,1)" style="font-family:'Liberation Sans';font-size:9.60px;font-weight:normal;" fill="#000" stroke="#000" stroke-width="0.15">$4,600.00</text>
<text transform="translate(1027.34,299) scale(1.1250,1)" style="font-family:'Liberation Sans';font-size:9.60px;font-weight:normal;" fill="#000" stroke="#000" stroke-width="0.15">$4,500.00</text>
<text transform="translate(1155.35,299) scale(1.1250,1)" style="font-family:'Liberation Sans';font-size:9.60px;font-weight:normal;" fill="#000" stroke="#000" stroke-width="0.15">$100.00</text>
<text transform="translate(1206.76,299) scale(1.1846,1)" style="font-family:'Liberation Sans';font-size:9.30px;font-weight:normal;" fill="#000" stroke="#000" stroke-width="0.15">Subtotal</text>
<text transform="translate(908.34,327) scale(1.1250,1)" style="font-family:'Liberation Sans';font-size:9.60px;font-weight:normal;" fill="#000" stroke="#000" stroke-width="0.15">$3,150.00</text>
<text transform="translate(1027.34,327) scale(1.1250,1)" style="font-family:'Liberation Sans';font-size:9.60px;font-weight:normal;" fill="#000" stroke="#000" stroke-width="0.15">$3,200.00</text>
<text transform="translate(1157.76,327) scale(1.1250,1)" style="font-family:'Liberation Sans';font-size:9.60px;font-weight:normal;" fill="#ff0000" stroke="#ff0000" stroke-width="0.15">-$50.00</text>
<text transform="translate(1206.76,327) scale(1.1846,1)" style="font-family:'Liberation Sans';font-size:9.30px;font-weight:normal;" fill="#000" stroke="#000" stroke-width="0.15">Subtotal</text>
<rect x="839" y="414" width="419" height="29" fill="#f2f2f2" />
<rect x="839" y="414" width="419" height="1" fill="#a6a6a6" />
<rect x="839" y="442" width="419" height="1" fill="#a6a6a6" />
<rect x="839" y="414" width="1" height="29" fill="#a6a6a6" />
<rect x="1257" y="414" width="1" height="29" fill="#a6a6a6" />
<text transform="translate(917.14,434) scale(0.9627,1)" style="font-family:'Liberation Sans';font-size:13.33px;font-weight:bold;" fill="#8064a2" >Actual</text>
<text transform="translate(1030.52,434) scale(0.9694,1)" style="font-family:'Liberation Sans';font-size:13.33px;font-weight:bold;" fill="#8064a2" >Budget</text>
<text transform="translate(1127.78,434) scale(1.0194,1)" style="font-family:'Liberation Sans';font-size:13.33px;font-weight:bold;" fill="#8064a2" >Difference</text>
<text transform="translate(1207.98,434) scale(0.9765,1)" style="font-family:'Liberation Sans';font-size:13.33px;font-weight:bold;" fill="#8064a2" >Group</text>
<rect x="840" y="443" width="356" height="197" fill="#e4dfec" />
<rect x="839" y="443" width="1" height="197" fill="#a6a6a6" />
<rect x="840" y="499" width="356" height="56" fill="#ccc0da" />
<rect x="840" y="597" width="356" height="43" fill="#ccc0da" />
<path d="M1196.5,640 L1196.5,442.5 L1257.5,442.5 L1257.5,640" fill="none" stroke="#ffc000" stroke-width="3"/>
<text transform="translate(917.35,496) scale(1.1250,1)" style="font-family:'Liberation Sans';font-size:9.60px;font-weight:normal;" fill="#000" stroke="#000" stroke-width="0.15">$850.00</text>
<text transform="translate(1036.35,496) scale(1.1250,1)" style="font-family:'Liberation Sans';font-size:9.60px;font-weight:normal;" fill="#000" stroke="#000" stroke-width="0.15">$650.00</text>
<text transform="translate(1151.75,496) scale(1.1250,1)" style="font-family:'Liberation Sans';font-size:9.60px;font-weight:normal;" fill="#ff0000" stroke="#ff0000" stroke-width="0.15">-$200.00</text>
<text transform="translate(1206.76,496) scale(1.1846,1)" style="font-family:'Liberation Sans';font-size:9.30px;font-weight:normal;" fill="#000" stroke="#000" stroke-width="0.15">Subtotal</text>
<text transform="translate(917.35,552) scale(1.1250,1)" style="font-family:'Liberation Sans';font-size:9.60px;font-weight:normal;" fill="#000" stroke="#000" stroke-width="0.15">$458.00</text>
<text transform="translate(1036.35,552) scale(1.1250,1)" style="font-family:'Liberation Sans';font-size:9.60px;font-weight:normal;" fill="#000" stroke="#000" stroke-width="0.15">$575.00</text>
<text transform="translate(1156.15,552) scale(1.1250,1)" style="font-family:'Liberation Sans';font-size:9.60px;font-weight:normal;" fill="#000" stroke="#000" stroke-width="0.15">$117.00</text>
<text transform="translate(1206.76,552) scale(1.1846,1)" style="font-family:'Liberation Sans';font-size:9.30px;font-weight:normal;" fill="#000" stroke="#000" stroke-width="0.15">Subtotal</text>
<text transform="translate(908.34,594) scale(1.1250,1)" style="font-family:'Liberation Sans';font-size:9.60px;font-weight:normal;" fill="#000" stroke="#000" stroke-width="0.15">$1,150.00</text>
<text transform="translate(1027.34,594) scale(1.1250,1)" style="font-family:'Liberation Sans';font-size:9.60px;font-weight:normal;" fill="#000" stroke="#000" stroke-width="0.15">$1,150.00</text>
<text transform="translate(1167.36,594) scale(1.1250,1)" style="font-family:'Liberation Sans';font-size:9.60px;font-weight:normal;" fill="#000" stroke="#000" stroke-width="0.15">$0.00</text>
<text transform="translate(1206.76,594) scale(1.1846,1)" style="font-family:'Liberation Sans';font-size:9.30px;font-weight:normal;" fill="#000" stroke="#000" stroke-width="0.15">Subtotal</text>
<text transform="translate(908.34,636) scale(1.1250,1)" style="font-family:'Liberation Sans';font-size:9.60px;font-weight:normal;" fill="#000" stroke="#000" stroke-width="0.15">$2,150.00</text>
<text transform="translate(1027.34,636) scale(1.1250,1)" style="font-family:'Liberation Sans';font-size:9.60px;font-weight:normal;" fill="#000" stroke="#000" stroke-width="0.15">$2,150.00</text>
<text transform="translate(1167.36,636) scale(1.1250,1)" style="font-family:'Liberation Sans';font-size:9.60px;font-weight:normal;" fill="#000" stroke="#000" stroke-width="0.15">$0.00</text>
<text transform="translate(1206.76,636) scale(1.1846,1)" style="font-family:'Liberation Sans';font-size:9.30px;font-weight:normal;" fill="#000" stroke="#000" stroke-width="0.15">Subtotal</text>
<rect x="839" y="94" width="419" height="108" fill="#ffffff" />
<rect x="839" y="94" width="419" height="1" fill="#a6a6a6" />
<rect x="839" y="201" width="419" height="1" fill="#a6a6a6" />
<rect x="839" y="94" width="1" height="108" fill="#a6a6a6" />
<rect x="1257" y="94" width="1" height="108" fill="#a6a6a6" />
<text transform="translate(1026.21,116.9) scale(0.8471,1)" style="font-family:'Liberation Sans';font-size:17.10px;font-weight:bold;" fill="#595959" >Actual</text>
<rect x="921" y="132" width="1" height="59" fill="#606060" />
<rect x="922" y="141" width="280" height="12" fill="#b7dee8" />
<rect x="922" y="170" width="238" height="12" fill="#ff5b5b" />
<text transform="translate(852.89,150.7) scale(1.0220,1)" style="font-family:'Liberation Sans';font-size:10.14px;font-weight:normal;" fill="#000" stroke="#000" stroke-width="0.15">Total Income</text>
<text transform="translate(845.20,179.7) scale(0.9650,1)" style="font-family:'Liberation Sans';font-size:10.14px;font-weight:normal;" fill="#000" stroke="#000" stroke-width="0.15">Total Expenses</text>
<text transform="translate(1149.89,150.7) scale(1.0747,1)" style="font-family:'Liberation Sans';font-size:10.14px;font-weight:normal;" fill="#000" stroke="#000" stroke-width="0.15">$7,750.00</text>
<text transform="translate(1108.89,179.7) scale(1.0747,1)" style="font-family:'Liberation Sans';font-size:10.14px;font-weight:normal;" fill="#000" stroke="#000" stroke-width="0.15">$6,608.00</text>
<rect x="8" y="640" width="1261" height="16" fill="#dfe3e9" />
<rect x="8" y="640" width="1261" height="1" fill="#a9aeb4" />
<rect x="8" y="655" width="1261" height="2" fill="#a4a9af" />
<rect x="8" y="654" width="1261" height="1" fill="#f4f6f8" />
<path d="M14,644 L15.5,644 L15.5,652 L14,652 Z M20.5,644 L16,648 L20.5,652 Z" fill="#4a4d52"/>
<path d="M34,644 L29.5,648 L34,652 Z" fill="#4a4d52"/>
<path d="M44,644 L48.5,648 L44,652 Z" fill="#4a4d52"/>
<path d="M58,644 L62.5,648 L58,652 Z M63,644 L64.5,644 L64.5,652 L63,652 Z" fill="#4a4d52"/>
<path d="M71,654 L71,641 L113,641 L113,654 Z" fill="url(#gTabHelp)"/>
<path d="M71.5,654 L71.5,641.5 L112.5,641.5 L112.5,654" fill="none" stroke="#b4b8bc" stroke-width="1"/>
<path d="M109,654 L113,654 L113,650 Z" fill="#c2c6ca"/>
<path d="M174.5,654 L188.0,641 L258.5,641 L245,654 Z" fill="url(#gTab)"/>
<path d="M243,654 L256.5,641 L311.5,641 L298,654 Z" fill="url(#gTab)"/>
<path d="M296,654 L309.5,641 L354.5,641 L341,654 Z" fill="url(#gTab)"/>
<path d="M339,654 L352.5,641 L396.0,641 L382.5,654 Z" fill="url(#gTab)"/>
<path d="M380.5,654 L394.0,641 L441.0,641 L427.5,654 Z" fill="url(#gTab)"/>
<path d="M425.5,654 L439.0,641 L481.5,641 L468,654 Z" fill="url(#gTab)"/>
<path d="M466,654 L479.5,641 L542.5,641 L529,654 Z" fill="url(#gTab)"/>
<path d="M527,654 L540.5,641 L625.5,641 L612,654 Z" fill="url(#gTab)"/>
<path d="M610,654 L623.5,641 L690.5,641 L677,654 Z" fill="url(#gTab)"/>
<path d="M675,654 L688.5,641 L768.0,641 L754.5,654 Z" fill="url(#gTab)"/>
<path d="M752.5,654 L766.0,641 L846.5,641 L833,654 Z" fill="url(#gTab)"/>
<path d="M174.5,654.5 L188.0,641" stroke="#f6f2e6" stroke-width="1.2" fill="none"/>
<path d="M173.7,654 L187.2,641" stroke="#9aa0a8" stroke-width="0.7" fill="none" stroke-dasharray="1,1"/>
<path d="M173.5,655 L178.5,655 L177.0,651 Z" fill="#c4c8cc"/>
<path d="M243,654.5 L256.5,641" stroke="#f6f2e6" stroke-width="1.2" fill="none"/>
<path d="M242.2,654 L255.7,641" stroke="#9aa0a8" stroke-width="0.7" fill="none" stroke-dasharray="1,1"/>
<path d="M242,655 L247,655 L245.5,651 Z" fill="#c4c8cc"/>
<path d="M296,654.5 L309.5,641" stroke="#f6f2e6" stroke-width="1.2" fill="none"/>
<path d="M295.2,654 L308.7,641" stroke="#9aa0a8" stroke-width="0.7" fill="none" stroke-dasharray="1,1"/>
<path d="M295,655 L300,655 L298.5,651 Z" fill="#c4c8cc"/>
<path d="M339,654.5 L352.5,641" stroke="#f6f2e6" stroke-width="1.2" fill="none"/>
<path d="M338.2,654 L351.7,641" stroke="#9aa0a8" stroke-width="0.7" fill="none" stroke-dasharray="1,1"/>
<path d="M338,655 L343,655 L341.5,651 Z" fill="#c4c8cc"/>
<path d="M380.5,654.5 L394.0,641" stroke="#f6f2e6" stroke-width="1.2" fill="none"/>
<path d="M379.7,654 L393.2,641" stroke="#9aa0a8" stroke-width="0.7" fill="none" stroke-dasharray="1,1"/>
<path d="M379.5,655 L384.5,655 L383.0,651 Z" fill="#c4c8cc"/>
<path d="M425.5,654.5 L439.0,641" stroke="#f6f2e6" stroke-width="1.2" fill="none"/>
<path d="M424.7,654 L438.2,641" stroke="#9aa0a8" stroke-width="0.7" fill="none" stroke-dasharray="1,1"/>
<path d="M424.5,655 L429.5,655 L428.0,651 Z" fill="#c4c8cc"/>
<path d="M466,654.5 L479.5,641" stroke="#f6f2e6" stroke-width="1.2" fill="none"/>
<path d="M465.2,654 L478.7,641" stroke="#9aa0a8" stroke-width="0.7" fill="none" stroke-dasharray="1,1"/>
<path d="M465,655 L470,655 L468.5,651 Z" fill="#c4c8cc"/>
<path d="M527,654.5 L540.5,641" stroke="#f6f2e6" stroke-width="1.2" fill="none"/>
<path d="M526.2,654 L539.7,641" stroke="#9aa0a8" stroke-width="0.7" fill="none" stroke-dasharray="1,1"/>
<path d="M526,655 L531,655 L529.5,651 Z" fill="#c4c8cc"/>
<path d="M610,654.5 L623.5,641" stroke="#f6f2e6" stroke-width="1.2" fill="none"/>
<path d="M609.2,654 L622.7,641" stroke="#9aa0a8" stroke-width="0.7" fill="none" stroke-dasharray="1,1"/>
<path d="M609,655 L614,655 L612.5,651 Z" fill="#c4c8cc"/>
<path d="M675,654.5 L688.5,641" stroke="#f6f2e6" stroke-width="1.2" fill="none"/>
<path d="M674.2,654 L687.7,641" stroke="#9aa0a8" stroke-width="0.7" fill="none" stroke-dasharray="1,1"/>
<path d="M674,655 L679,655 L677.5,651 Z" fill="#c4c8cc"/>
<path d="M752.5,654.5 L766.0,641" stroke="#f6f2e6" stroke-width="1.2" fill="none"/>
<path d="M751.7,654 L765.2,641" stroke="#9aa0a8" stroke-width="0.7" fill="none" stroke-dasharray="1,1"/>
<path d="M751.5,655 L756.5,655 L755.0,651 Z" fill="#c4c8cc"/>
<path d="M831,654.5 L844.5,641" stroke="#f6f2e6" stroke-width="1.2" fill="none"/>
<path d="M830.2,654 L843.7,641" stroke="#9aa0a8" stroke-width="0.7" fill="none" stroke-dasharray="1,1"/>
<path d="M830,655 L835,655 L833.5,651 Z" fill="#c4c8cc"/>
<path d="M113,655 L113,640 L188.0,640 L174.5,655 Z" fill="url(#gTabAct)"/>
<path d="M174.5,654.5 L188.0,640.5" stroke="#9aa0a8" stroke-width="0.8" fill="none"/>
<path d="M844.5,641 L881.5,641 L868,654 L831,654 Z" fill="#e4e7eb"/>
<path d="M868,654 L881.5,641" stroke="#a0a6ac" stroke-width="0.8" fill="none"/>
<rect x="848.5" y="646.5" width="9" height="7" fill="#e4eefa" stroke="#4f6fa8" stroke-width="0.9"/>
<path d="M846,642 L847,645 L850,645 L847.5,647 L848.5,650 L846,648 L843.5,650 L844.5,647 L842,645 L845,645 Z" fill="#f0a020"/>
<text transform="translate(78.49,652.8) scale(0.9788,1)" style="font-family:'Liberation Sans';font-size:12.90px;font-weight:normal;" fill="#111" >Help</text>
<text transform="translate(122.88,652.8) scale(0.9900,1)" style="font-family:'Liberation Sans';font-size:12.61px;font-weight:bold;" fill="#000" >January</text>
<text transform="translate(189.04,652.8) scale(0.9506,1)" style="font-family:'Liberation Sans';font-size:12.61px;font-weight:normal;" fill="#1a1a1a" >February</text>
<text transform="translate(257.06,652.8) scale(0.9305,1)" style="font-family:'Liberation Sans';font-size:12.61px;font-weight:normal;" fill="#1a1a1a" >March</text>
<text transform="translate(311.50,652.8) scale(0.9206,1)" style="font-family:'Liberation Sans';font-size:12.61px;font-weight:normal;" fill="#1a1a1a" >April</text>
<text transform="translate(354.49,652.8) scale(0.9031,1)" style="font-family:'Liberation Sans';font-size:12.61px;font-weight:normal;" fill="#1a1a1a" >May</text>
<text transform="translate(394.68,652.8) scale(0.9417,1)" style="font-family:'Liberation Sans';font-size:12.61px;font-weight:normal;" fill="#1a1a1a" >June</text>
<text transform="translate(440.89,652.8) scale(0.8791,1)" style="font-family:'Liberation Sans';font-size:12.61px;font-weight:normal;" fill="#1a1a1a" >July</text>
<text transform="translate(483.00,652.8) scale(0.9623,1)" style="font-family:'Liberation Sans';font-size:12.61px;font-weight:normal;" fill="#1a1a1a" >August</text>
<text transform="translate(542.50,652.8) scale(0.9982,1)" style="font-family:'Liberation Sans';font-size:12.61px;font-weight:normal;" fill="#1a1a1a" >September</text>
<text transform="translate(625.20,652.8) scale(0.9981,1)" style="font-family:'Liberation Sans';font-size:12.61px;font-weight:normal;" fill="#1a1a1a" >October</text>
<text transform="translate(689.01,652.8) scale(0.9827,1)" style="font-family:'Liberation Sans';font-size:12.61px;font-weight:normal;" fill="#1a1a1a" >November</text>
<text transform="translate(766.52,652.8) scale(0.9739,1)" style="font-family:'Liberation Sans';font-size:12.61px;font-weight:normal;" fill="#1a1a1a" >December</text>
<rect x="1085" y="641" width="8" height="14" fill="#fafafa" />
<rect x="1085.5" y="641.5" width="7" height="13" fill="none" stroke="#9ea3a8" stroke-width="1"/>
<rect x="1088" y="644" width="1" height="8" fill="#7a7f84" />
<path d="M1103.5,644 L1098,648 L1103.5,652 Z" fill="#4a4d52"/>
<rect x="1135.5" y="641.5" width="114" height="13" rx="2" fill="url(#gScroll)" stroke="#a8adb3"/>
<rect x="1189" y="645" width="1" height="6" fill="#7d8288" />
<rect x="1191" y="645" width="1" height="6" fill="#7d8288" />
<rect x="1193" y="645" width="1" height="6" fill="#7d8288" />
<rect x="1195" y="645" width="1" height="6" fill="#7d8288" />
<path d="M1258,644 L1263.5,648 L1258,652 Z" fill="#4a4d52"/>
<rect x="7" y="656" width="1263" height="23" fill="url(#gStatus)" />
<rect x="7" y="678" width="1263" height="1" fill="#8a8e93" />
<rect x="7" y="656" width="1" height="23" fill="#8a8e92" />
<rect x="1269" y="656" width="1" height="23" fill="#8a8e92" />
<text transform="translate(15.63,670.8) scale(0.9852,1)" style="font-family:'Liberation Sans';font-size:11.01px;font-weight:normal;" fill="#454a52" >Ready</text>
<rect x="56" y="658" width="1" height="19" fill="#a9aeb4" />
<rect x="91" y="658" width="1" height="19" fill="#a9aeb4" />
<rect x="66.5" y="660.5" width="13.5" height="12" fill="#f2f6fc" stroke="#2c4c8c" stroke-width="1"/>
<rect x="67" y="661" width="13" height="2" fill="#4f7fd0" />
<rect x="69" y="665" width="2.5" height="1.5" fill="#7a9ad6" />
<rect x="72.5" y="665" width="2.5" height="1.5" fill="#7a9ad6" />
<rect x="76" y="665" width="2.5" height="1.5" fill="#7a9ad6" />
<rect x="69" y="668" width="2.5" height="1.5" fill="#7a9ad6" />
<rect x="72.5" y="668" width="2.5" height="1.5" fill="#7a9ad6" />
<rect x="76" y="668" width="2.5" height="1.5" fill="#7a9ad6" />
<rect x="69" y="671" width="2.5" height="1.5" fill="#7a9ad6" />
<rect x="72.5" y="671" width="2.5" height="1.5" fill="#7a9ad6" />
<rect x="76" y="671" width="2.5" height="1.5" fill="#7a9ad6" />
<circle cx="68.5" cy="661.5" r="3" fill="#e8402a"/>
<circle cx="67.8" cy="660.6" r="1" fill="#ffb0a0"/>
<rect x="1018" y="658" width="1" height="20" fill="#a9aeb4" />
<rect x="1023.5" y="658.5" width="18" height="18" rx="3" fill="#fde38a" stroke="#e3a43a"/>
<rect x="1026.5" y="662.5" width="12" height="9" fill="#fff" stroke="#4d5360" stroke-width="1"/>
<rect x="1030.5" y="663" width="1" height="8" fill="#4d5360" />
<rect x="1034.5" y="663" width="1" height="8" fill="#4d5360" />
<rect x="1027" y="665.3" width="11" height="1" fill="#4d5360" />
<rect x="1027" y="668.3" width="11" height="1" fill="#4d5360" />
<rect x="1044.5" y="661.5" width="13" height="11" fill="#b9bdc2" stroke="#5f6266"/>
<rect x="1047.5" y="663.5" width="7" height="7" fill="#f4f4f4" stroke="#5f6266"/>
<rect x="1063.5" y="661.5" width="13" height="11" fill="#b9bdc2" stroke="#5f6266"/>
<rect x="1064" y="662" width="2" height="7" fill="#f4f4f4" />
<rect x="1067" y="662" width="2" height="7" fill="#f4f4f4" />
<text transform="translate(1087.95,670.8) scale(1.0060,1)" style="font-family:'Liberation Sans';font-size:11.01px;font-weight:normal;" fill="#3c4148" >69%</text>
<circle cx="1126" cy="667" r="7.5" fill="#f3f4f6" stroke="#6c7075"/>
<rect x="1122" y="666" width="8" height="2" fill="#3b3f44" />
<rect x="1134" y="667" width="100" height="1" fill="#a0a4a8" />
<rect x="1184" y="664" width="1" height="6" fill="#a0a4a8" />
<path d="M1164.5,660.5 L1172.5,660.5 L1172.5,669 L1168.5,672.5 L1164.5,669 Z" fill="#f6f6f6" stroke="#6c7075"/>
<circle cx="1242" cy="667" r="7.5" fill="#f3f4f6" stroke="#6c7075"/>
<rect x="1238" y="666" width="8" height="2" fill="#3b3f44" />
<rect x="1241" y="663" width="2" height="8" fill="#3b3f44" />
<rect x="1266" y="668" width="2" height="2" fill="#a8acb0" />
<rect x="1263" y="671" width="2" height="2" fill="#a8acb0" />
<rect x="1266" y="671" width="2" height="2" fill="#a8acb0" />
<rect x="1260" y="674" width="2" height="2" fill="#a8acb0" />
<rect x="1263" y="674" width="2" height="2" fill="#a8acb0" />
<rect x="1266" y="674" width="2" height="2" fill="#a8acb0" />
<rect x="9.5" y="13.5" width="15" height="15" fill="#f4fbf4" stroke="#2f7d32"/>
<path d="M12,16 L15,16 L17,19.5 L19,16 L22,16 L18.5,21 L22.5,26.5 L19.5,26.5 L17,22.5 L14.5,26.5 L11.5,26.5 L15.5,21 Z" fill="#1f8a2c"/>
<rect x="30" y="15" width="1" height="12" fill="#a0a4a8" />
<rect x="37.5" y="14.5" width="14" height="14" rx="1" fill="#4a5fc8" stroke="#2d3c8a"/>
<rect x="40" y="15" width="8" height="6" fill="#eef0f8" />
<rect x="42" y="23" width="5" height="5" fill="#222a55" />
<rect x="43" y="24" width="2" height="3" fill="#dde" />
<rect x="60.5" y="13.5" width="12" height="15" rx="1.5" fill="#c6d2e0" stroke="#6a7f9a"/>
<rect x="62" y="15" width="9" height="3" fill="#5a8ad0" />
<rect x="62" y="20" width="2" height="2" fill="#c03a3a" />
<rect x="65" y="20" width="2" height="2" fill="#c03a3a" />
<rect x="68" y="20" width="2" height="2" fill="#c03a3a" />
<rect x="62" y="23" width="2" height="2" fill="#3a6ac0" />
<rect x="65" y="23" width="2" height="2" fill="#3a6ac0" />
<rect x="68" y="23" width="2" height="2" fill="#3a6ac0" />
<rect x="62" y="26" width="2" height="2" fill="#3a6ac0" />
<rect x="65" y="26" width="2" height="2" fill="#3a6ac0" />
<rect x="68" y="26" width="2" height="2" fill="#3a6ac0" />
<path d="M76,20 L81,20 L78.5,23 Z" fill="#222"/>
<path d="M90.5,19 L90.5,15.5 Q90.5,14 92,14 Q93.5,14 93.5,15.5 L93.5,19 Z" fill="#5a86e0" stroke="#1e3a8e" stroke-width="0.9"/>
<rect x="88.5" y="18.5" width="7" height="8.5" fill="#3f6fd6" stroke="#1e3a8e" stroke-width="0.9"/>
<rect x="89.5" y="22" width="5" height="4.2" fill="#f2f5fb"/>
<path d="M98.5,19 L98.5,15.5 Q98.5,14 100,14 Q101.5,14 101.5,15.5 L101.5,19 Z" fill="#5a86e0" stroke="#1e3a8e" stroke-width="0.9"/>
<rect x="96.5" y="18.5" width="7" height="8.5" fill="#3f6fd6" stroke="#1e3a8e" stroke-width="0.9"/>
<rect x="97.5" y="22" width="5" height="4.2" fill="#f2f5fb"/>
<path d="M112.5,19 L112.5,15.5 Q112.5,14 114,14 Q115.5,14 115.5,15.5 L115.5,19 Z" fill="#5a86e0" stroke="#1e3a8e" stroke-width="0.9"/>
<rect x="110.5" y="18.5" width="7" height="8.5" fill="#3f6fd6" stroke="#1e3a8e" stroke-width="0.9"/>
<rect x="111.5" y="22" width="5" height="4.2" fill="#f2f5fb"/>
<path d="M120.5,19 L120.5,15.5 Q120.5,14 122,14 Q123.5,14 123.5,15.5 L123.5,19 Z" fill="#5a86e0" stroke="#1e3a8e" stroke-width="0.9"/>
<rect x="118.5" y="18.5" width="7" height="8.5" fill="#3f6fd6" stroke="#1e3a8e" stroke-width="0.9"/>
<rect x="119.5" y="22" width="5" height="4.2" fill="#f2f5fb"/>
<path d="M128,20 L133,20 L130.5,23 Z" fill="#222"/>
<path d="M146,18.5 Q152.5,16 152.5,21 Q152.5,25 148.5,26" stroke="#aeb3b9" stroke-width="2.6" fill="none"/>
<path d="M141.5,18.5 L147.5,14 L147.5,23 Z" fill="#aeb3b9"/>
<path d="M160,20 L165,20 L162.5,23 Z" fill="#a4a9af"/>
<path d="M182,18.5 Q175.5,16 175.5,21 Q175.5,25 179.5,26" stroke="#aeb3b9" stroke-width="2.6" fill="none"/>
<path d="M186.5,18.5 L180.5,14 L180.5,23 Z" fill="#aeb3b9"/>
<path d="M192,20 L197,20 L194.5,23 Z" fill="#a4a9af"/>
<rect x="204" y="15" width="1" height="12" fill="#888" />
<rect x="209" y="18" width="7" height="1" fill="#333" />
<path d="M209,21 L216,21 L212.5,25 Z" fill="#333"/>
<rect x="1176.5" y="20" width="10" height="3.5" rx="1" fill="#fafafa" stroke="#4a4d52" stroke-width="1.2"/>
<rect x="1211.5" y="16.5" width="10" height="8" rx="1" fill="none" stroke="#555"/>
<rect x="1214.5" y="19.5" width="4" height="2" fill="none" stroke="#555"/>
<path d="M1247.5,17 L1255.5,24 M1255.5,17 L1247.5,24" stroke="#4a4d52" stroke-width="4" stroke-linecap="round"/>
<path d="M1247.5,17 L1255.5,24 M1255.5,17 L1247.5,24" stroke="#fafafa" stroke-width="1.8" stroke-linecap="round"/>
<path d="M1167,43 L1170.2,46.2 L1173.4,43" stroke="#4a4d52" stroke-width="3.8" stroke-linecap="round" stroke-linejoin="round" fill="none"/>
<path d="M1167,43 L1170.2,46.2 L1173.4,43" stroke="#fafafa" stroke-width="1.6" stroke-linecap="round" stroke-linejoin="round" fill="none"/>
<circle cx="1192" cy="45" r="8" fill="#3c7fd0" stroke="#2a5ea8"/>
<circle cx="1190" cy="42" r="5" fill="#7fb2ec" opacity="0.5"/>
<text transform="translate(1187.96,49.5) scale(1.1218,1)" style="font-family:'Liberation Sans';font-size:12.00px;font-weight:bold;" fill="#ffffff" >?</text>
<rect x="1209.5" y="44.5" width="10" height="3.5" rx="1" fill="#fafafa" stroke="#4a4d52" stroke-width="1.2"/>
<rect x="1233.5" y="40.5" width="8" height="6" fill="#fafafa" stroke="#555"/>
<rect x="1230.5" y="43.5" width="8" height="6" fill="#fafafa" stroke="#555"/>
<path d="M1254.5,41.5 L1262.5,48.5 M1262.5,41.5 L1254.5,48.5" stroke="#4a4d52" stroke-width="4" stroke-linecap="round"/>
<path d="M1254.5,41.5 L1262.5,48.5 M1262.5,41.5 L1254.5,48.5" stroke="#fafafa" stroke-width="1.8" stroke-linecap="round"/></svg></body></html>
